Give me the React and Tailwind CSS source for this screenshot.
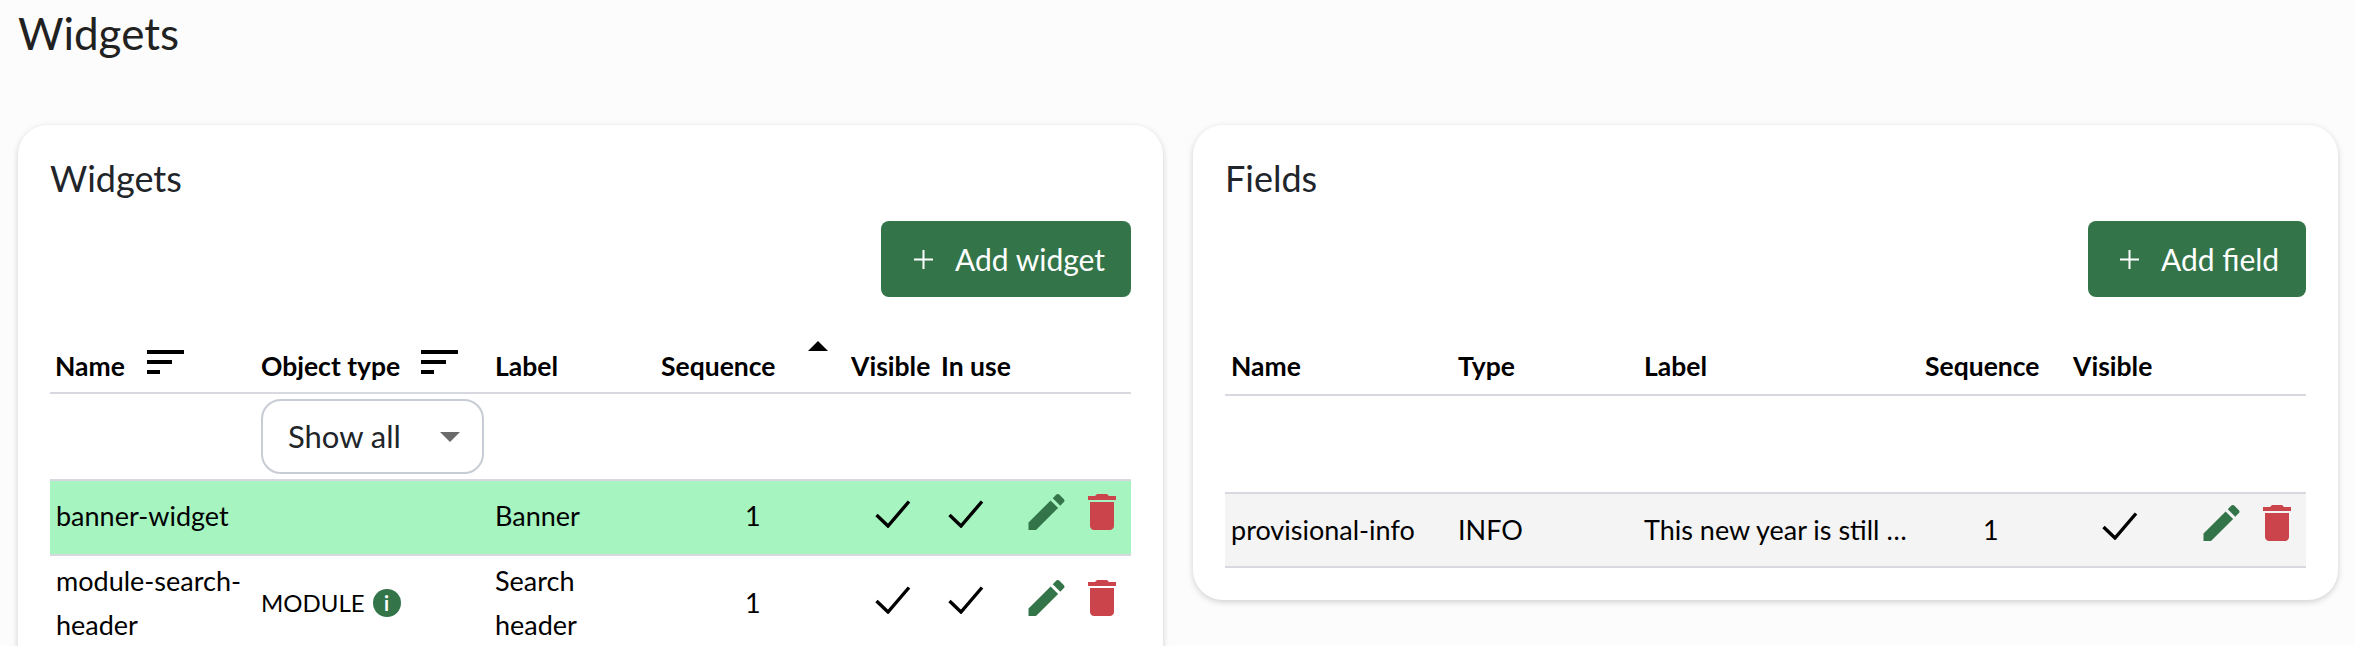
function CheckIcon() {
  return (
    <svg width="36" height="28" viewBox="0 0 36 28" className="inline-block" fill="none" stroke="#000" strokeWidth="3.4">
      <path d="M1.5 15 L13 26 L34 1.5" />
    </svg>
  );
}

function EditIcon() {
  return (
    <svg width="37" height="36" viewBox="3 3 18 18" fill="#337549">
      <path d="M3 17.25V21h3.75L17.81 9.94l-3.75-3.75L3 17.25zM20.71 7.04c.39-.39.39-1.02 0-1.41l-2.34-2.34c-.39-.39-1.02-.39-1.41 0l-1.83 1.83 3.75 3.75 1.83-1.83z" />
    </svg>
  );
}

function TrashIcon() {
  return (
    <svg width="28" height="36" viewBox="5 3 14 18" fill="#cc444b">
      <path d="M6 19c0 1.1.9 2 2 2h8c1.1 0 2-.9 2-2V7H6v12zM19 4h-3.5l-1-1h-5l-1 1H5v2h14V4z" />
    </svg>
  );
}

function SortIcon() {
  return (
    <svg width="37" height="24" viewBox="0 0 37 24" fill="#000" className="absolute top-[-35px] left-0">
      <rect x="0" y="0" width="37" height="4" />
      <rect x="0" y="10" width="25" height="4" />
      <rect x="0" y="20" width="13" height="4" />
    </svg>
  );
}

function Actions() {
  return (
    <div className="flex items-start gap-[23px] pl-[1px]">
      <EditIcon />
      <TrashIcon />
    </div>
  );
}

function AddButton({ label, className }) {
  return (
    <div className="flex justify-end">
      <button className={"flex h-[76px] items-center rounded-[8px] bg-[#337549] text-[30px] text-white " + className}>
        <svg width="19" height="19" viewBox="0 0 19 19" stroke="#fff" strokeWidth="2" className="mr-[22px]">
          <path d="M9.5 0v19M0 9.5h19" />
        </svg>
        {label}
      </button>
    </div>
  );
}

function WidgetsTable() {
  return (
    <table className="w-[1081px] table-fixed border-collapse text-[27px] text-black">
      <colgroup>
        <col className="w-[206px]" />
        <col className="w-[234px]" />
        <col className="w-[165px]" />
        <col className="w-[190px]" />
        <col className="w-[91px]" />
        <col className="w-[85px]" />
        <col className="w-[110px]" />
      </colgroup>
      <thead>
        <tr className="h-[60px] border-b-2 border-[#d8d8e0] text-left text-[26.5px] font-bold">
          <th className="px-[5px] pt-[9px]">
            <span className="relative">
              Name
              <span className="absolute top-[35px] left-[92px]"><SortIcon /></span>
            </span>
          </th>
          <th className="px-[5px] pt-[9px] whitespace-nowrap">
            <span className="relative">
              Object type
              <span className="absolute top-[35px] left-[160px]"><SortIcon /></span>
            </span>
          </th>
          <th className="px-[5px] pt-[9px]">Label</th>
          <th className="relative px-[6px] pt-[9px]">
            Sequence
            <span className="absolute top-[8px] left-[153px] h-0 w-0 border-x-[10px] border-b-[10px] border-x-transparent border-b-black" />
          </th>
          <th className="px-[6px] pt-[9px]">Visible</th>
          <th className="px-[5px] pt-[9px] whitespace-nowrap">In use</th>
          <th />
        </tr>
      </thead>
      <tbody>
        <tr className="h-[87px] border-b-2 border-[#d8d8e0]">
          <td />
          <td className="px-[5px]">
            <div className="flex h-[75px] w-[223px] items-center justify-between rounded-[20px] border-2 border-[#c8ccd4] bg-white pr-[22px] pl-[25px] text-[31px] text-[#212529]">
              Show all
              <span className="h-0 w-0 border-x-[10px] border-t-[10px] border-x-transparent border-t-[#6b6b6b]" />
            </div>
          </td>
          <td colSpan="5" />
        </tr>
        <tr className="h-[75px] border-b-2 border-[#d8d8e0] bg-[#a6f4c0]">
          <td className="px-[6px] pb-[2px]">banner-widget</td>
          <td />
          <td className="px-[5px] pb-[2px]">Banner</td>
          <td className="pb-[2px] pl-[90px]">1</td>
          <td className="pb-[12px] pl-[30px]"><CheckIcon /></td>
          <td className="pb-[12px] pl-[12px]"><CheckIcon /></td>
          <td className="pb-[12px] pl-[6px]"><Actions /></td>
        </tr>
        <tr>
          <td className="px-[6px] pt-[3px] leading-[44px] break-words">module-search-header</td>
          <td className="px-[5px] pt-[3px]">
            <div className="flex items-center gap-[8px] text-[24px]">
              MODULE
              <span className="flex h-[28px] w-[28px] items-center justify-center rounded-full bg-[#337549] text-[20px] font-bold text-white">i</span>
            </div>
          </td>
          <td className="px-[5px] pt-[3px] leading-[44px]">Search header</td>
          <td className="pt-[3px] pl-[90px]">1</td>
          <td className="pb-[8px] pl-[30px]"><CheckIcon /></td>
          <td className="pb-[8px] pl-[12px]"><CheckIcon /></td>
          <td className="pb-[8px] pl-[6px]"><Actions /></td>
        </tr>
      </tbody>
    </table>
  );
}

function FieldsTable() {
  return (
    <table className="mt-[37px] w-[1081px] table-fixed border-collapse text-[27px] text-black">
      <colgroup>
        <col className="w-[227px]" />
        <col className="w-[187px]" />
        <col className="w-[281px]" />
        <col className="w-[147px]" />
        <col className="w-[128px]" />
        <col className="w-[111px]" />
      </colgroup>
      <thead>
        <tr className="h-[61px] border-b-2 border-[#d8d8e0] text-left text-[26.5px] font-bold">
          <th className="px-[6px] pt-[6px]">Name</th>
          <th className="px-[6px] pt-[6px]">Type</th>
          <th className="px-[5px] pt-[6px]">Label</th>
          <th className="px-[5px] pt-[6px]">Sequence</th>
          <th className="px-[6px] pt-[6px]">Visible</th>
          <th />
        </tr>
      </thead>
      <tbody>
        <tr className="h-[98px] border-b-2 border-[#d8d8e0]">
          <td colSpan="6" />
        </tr>
        <tr className="h-[74px] border-b-2 border-[#d8d8e0] bg-[#f4f4f4]">
          <td className="px-[6px]">provisional-info</td>
          <td className="px-[6px]">INFO</td>
          <td className="px-[5px] whitespace-nowrap">This new year is still …</td>
          <td className="pl-[63px]">1</td>
          <td className="pb-[14px] pl-[35px]"><CheckIcon /></td>
          <td className="pb-[14px] pl-[7px]"><Actions /></td>
        </tr>
      </tbody>
    </table>
  );
}

export default function App() {
  return (
    <div className="h-[646px] overflow-hidden bg-[#fcfcfc] pr-[16px] pl-[18px] font-['Lato',sans-serif]">
      <h1 className="h-[125px] pt-[3px] text-[44px] leading-[60px] text-[#212121]">Widgets</h1>
      <div className="grid grid-cols-2 items-start gap-[30px]">
        <section className="rounded-[30px] bg-white px-[32px] pt-[28px] pb-[32px] shadow-[0_2px_6px_rgba(0,0,0,0.18)]">
          <h2 className="h-[68px] text-[36px] leading-[50px] text-[#212529]">Widgets</h2>
          <AddButton label="Add widget" className="w-[250px] pl-[33px]" />
          <div className="mt-[36px]">
            <WidgetsTable />
          </div>
        </section>
        <section className="rounded-[30px] bg-white px-[32px] pt-[28px] pb-[32px] shadow-[0_2px_6px_rgba(0,0,0,0.18)]">
          <h2 className="h-[68px] text-[36px] leading-[50px] text-[#212529]">Fields</h2>
          <AddButton label="Add field" className="w-[218px] pl-[32px]" />
          <FieldsTable />
        </section>
      </div>
    </div>
  );
}
